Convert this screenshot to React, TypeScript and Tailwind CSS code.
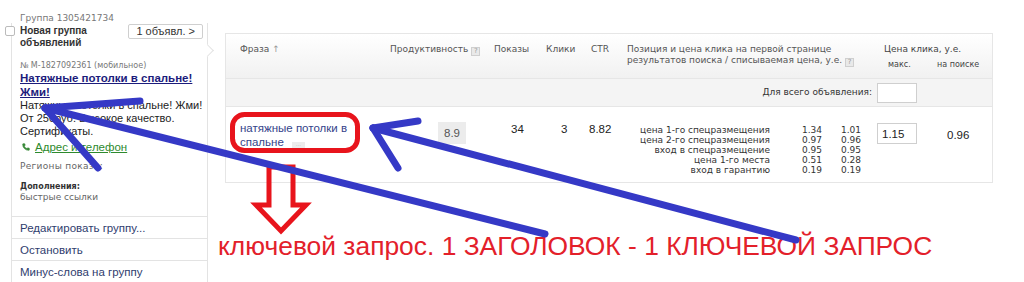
import { Phone } from 'lucide-react';

const verdana = "font-['DejaVu_Sans',sans-serif]";
const arial = "font-['Liberation_Sans',Arial,sans-serif]";

function Help() {
  return (
    <span className="inline-flex items-center justify-center w-[9px] h-[9px] ml-[3px] align-[-1px] border border-[#cfcfcf] bg-[#e9e9e9] text-[7px] leading-none text-[#999]">
      ?
    </span>
  );
}

const positions = [
  { label: 'цена 1-го спецразмещения', max: '1.34', real: '1.01' },
  { label: 'цена 2-го спецразмещения', max: '0.97', real: '0.96' },
  { label: 'вход в спецразмещение', max: '0.95', real: '0.95' },
  { label: 'цена 1-го места', max: '0.51', real: '0.28' },
  { label: 'вход в гарантию', max: '0.19', real: '0.19' },
];

function GroupPanel() {
  return (
    <aside className={`w-[215px] shrink-0 pt-[13px] ${arial}`}>
      <div className={`pl-[20px] text-[9px] leading-[10px] text-[#777] ${verdana}`}>Группа 1305421734</div>

      <div className="relative ml-[11px] w-[197px] border-l border-r border-[#e3e3e3] pl-[8px] pr-[4px] pt-[1px]">
        <span className="absolute left-[-7px] top-[3px] w-[10px] h-[10px] rounded-[2px] border border-[#bbb] bg-white" />
        <span className="absolute right-[-5px] top-[23px] w-[9px] h-[9px] rotate-45 border-t border-r border-[#e3e3e3] bg-white" />

        <div className="flex items-start justify-between">
          <div className="w-[92px] pt-[1px] text-[10px] leading-[12px] font-bold text-[#333]">Новая группа объявлений</div>
          <div className="h-[15px] px-[7px] border border-[#cfcfcf] rounded-[2px] text-[11px] leading-[13px] text-[#333]">
            1 объявл. &gt;
          </div>
        </div>

        <div className={`mt-[12px] text-[8px] leading-[10px] text-[#777] ${verdana}`}>№ M-1827092361 (мобильное)</div>
        <a className="block text-[11.5px] leading-[14px] font-bold text-[#1c1c7c] underline">Натяжные потолки в спальне! Жми!</a>
        <p className="text-[11px] leading-[13px] text-[#222]">Натяжные потолки в спальне! Жми! От 250руб. Высокое качество. Сертификаты.</p>
        <div className="mt-[2px] flex items-center gap-[5px] text-[11.5px] leading-[14px]">
          <Phone size={8} className="text-[#3a8a3a] fill-[#3a8a3a] ml-[2px]" />
          <a className="text-[#2d8a2d] underline">Адрес и телефон</a>
        </div>
        <div className={`mt-[7px] text-[9px] leading-[10px] tracking-[0.3px] text-[#666] ${verdana}`}>Регионы показа:</div>
        <div className={`mt-[10px] text-[8px] leading-[11px] font-bold text-[#333] ${verdana}`}>Дополнения:</div>
        <div className={`text-[9px] leading-[11px] text-[#666] ${verdana}`}>быстрые ссылки</div>

        <div className="mt-[13px] -ml-[8px] -mr-[4px] text-[11.5px] text-[#2f3d6e]">
          {['Редактировать группу...', 'Остановить', 'Минус-слова на группу'].map((item) => (
            <div key={item} className="h-[22px] border-t border-[#e3e3e3] pl-[8px] pt-[3px] leading-[16px]">
              {item}
            </div>
          ))}
        </div>
      </div>
    </aside>
  );
}

function PhraseTable() {
  return (
    <div className="w-[768px] border border-[#e6e6e6] bg-white">
      <div className={`flex h-[44px] pt-[10px] bg-gradient-to-b from-white to-[#f1f1f1] text-[9px] leading-[11px] text-[#555] ${verdana}`}>
        <div className="w-[159px] pl-[14px]">Фраза <span className="text-[#999]">↑</span></div>
        <div className="w-[109px] pl-[5px]">Продуктивность<Help /></div>
        <div className="w-[52px]">Показы</div>
        <div className="w-[41px]">Клики</div>
        <div className="w-[40px] pl-[4px]">CTR</div>
        <div className="w-[250px]">
          Позиция и цена клика на первой странице
          <br />
          результатов поиска / списываемая цена, у.е.<Help />
        </div>
        <div className="w-[115px] text-[#444]">
          <div className="pl-[7px]">Цена клика, у.е.</div>
          <div className="mt-[4px] flex text-[8px]">
            <span className="pl-[11px] w-[60px]">макс.</span>
            <span>на поиске</span>
          </div>
        </div>
      </div>

      <div className="flex h-[28px] items-center justify-end pr-[75px] border-t border-[#e6e6e6] bg-[#f4f4f4]">
        <span className={`mr-[5px] text-[9px] text-[#333] ${verdana}`}>Для всего объявления:</span>
        <span className="w-[40px] h-[20px] border border-[#cfcfcf] bg-white" />
      </div>

      <div className={`flex h-[76px] border-t border-[#e6e6e6] ${arial} text-[11.5px] text-[#222]`}>
        <div className="w-[159px] pl-[14px] pt-[14px] leading-[14px] text-[#34438a]">
          натяжные потолки в
          <br />
          спальне
          <span className="inline-flex ml-[8px] w-[13px] h-[7px] bg-[#ececec] text-[6px] leading-[5px] text-[#bbb] justify-center">...</span>
        </div>
        <div className="w-[109px] pl-[53px] pt-[15px]">
          <div className="w-[28px] h-[22px] bg-[#ececec] text-center leading-[23px] text-[#555]">8.9</div>
        </div>
        <div className="w-[52px] pl-[17px] pt-[15px] leading-[14px]">34</div>
        <div className="w-[41px] pl-[15px] pt-[15px] leading-[14px]">3</div>
        <div className="w-[40px] pl-[2px] pt-[15px] leading-[14px]">8.82</div>
        <div className={`w-[250px] pt-[18px] text-[9px] leading-[10px] text-[#333] ${verdana}`}>
          {positions.map((p) => (
            <div key={p.label} className="flex">
              <span className="w-[143px] text-right">{p.label}</span>
              <span className="w-[52px] text-right">{p.max}</span>
              <span className="w-[39px] text-right">{p.real}</span>
            </div>
          ))}
        </div>
        <div className="w-[115px] flex items-start pt-[16px]">
          <div className="w-[40px] h-[21px] border border-[#cfcfcf] pl-[4px] leading-[21px]">1.15</div>
          <div className="ml-[30px] pt-[5px] leading-[14px]">0.96</div>
        </div>
      </div>
    </div>
  );
}

function Annotations() {
  return (
    <svg className="absolute inset-0 w-full h-full pointer-events-none" viewBox="0 0 1024 282">
      <rect x="232.5" y="114.5" width="125" height="36" rx="12" fill="none" stroke="#e8141c" strokeWidth="5" />
      <polygon
        points="269,167 269,205 256,205 281,231 306,205 293,205 293,167"
        fill="none"
        stroke="#e8141c"
        strokeWidth="5"
        strokeLinejoin="miter"
      />
      <g stroke="#3539c6" strokeWidth="7" strokeLinecap="round" fill="none">
        <line x1="45" y1="108" x2="545" y2="234" />
        <line x1="45" y1="108" x2="140" y2="101" />
        <line x1="45" y1="108" x2="98" y2="168" />
        <line x1="373" y1="128" x2="796" y2="240" />
        <line x1="373" y1="128" x2="418" y2="121" />
        <line x1="373" y1="128" x2="398" y2="168" />
      </g>
    </svg>
  );
}

export default function App() {
  return (
    <div className="relative flex w-[1024px] h-[282px] overflow-hidden bg-white">
      <GroupPanel />
      <main className="ml-[10px] pt-[33px]">
        <PhraseTable />
        <p className={`mt-[48px] -ml-[7px] text-[26.4px] leading-[30px] text-[#e3202a] ${arial}`}>
          ключевой запрос. 1 ЗАГОЛОВОК - 1 КЛЮЧЕВОЙ ЗАПРОС
        </p>
      </main>
      <Annotations />
    </div>
  );
}
